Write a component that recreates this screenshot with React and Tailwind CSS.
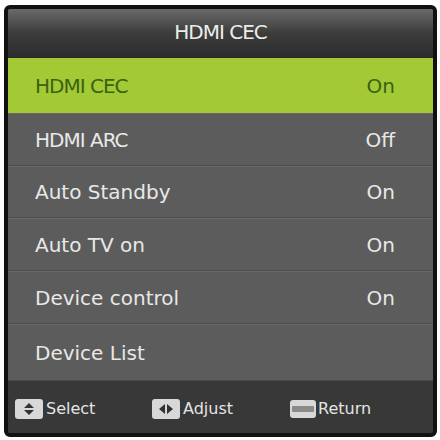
import React from 'react'

// HDMI CEC settings menu as shown on the TV's on-screen display
const rows = [
  { label: 'HDMI ARC', value: 'Off', h: 'h-[53px]' },
  { label: 'Auto Standby', value: 'On', h: 'h-[52px]' },
  { label: 'Auto TV on', value: 'On', h: 'h-[53px]' },
  { label: 'Device control', value: 'On', h: 'h-[53px]' },
  { label: 'Device List', value: '', h: 'h-[57px]' },
]

function KeyIcon({ children, className = '' }) {
  return (
    <span className={`flex items-center justify-center rounded-[3px] bg-[#d8d8d8] ${className}`}>
      {children}
    </span>
  )
}

export default function App() {
  return (
    <div className="w-[440px] h-[440px] bg-white pl-[4px] pt-[5px] font-['DejaVu_Sans',sans-serif]">
      <div className="w-[433px] h-[432px] rounded-[6px] border-[4px] border-[#111] bg-[#3a3a3a] overflow-hidden flex flex-col">
        {/* Title bar */}
        <div className="h-[49px] shrink-0 flex items-center justify-center pb-[4px] bg-gradient-to-b from-[#6a6a6a] via-[#3c3c3c] to-[#2c2c2c] text-[#ececec] text-[20px] tracking-[-1px]">
          HDMI CEC
        </div>

        {/* Selected row */}
        <div className="h-[55px] shrink-0 flex items-center justify-between pl-[27px] pr-[38px] bg-[#a3c935] text-[#3a6212] text-[20px]">
          <span className="tracking-[-1px]">HDMI CEC</span>
          <span>On</span>
        </div>

        {rows.map((r) => (
          <div
            key={r.label}
            className={`${r.h} shrink-0 flex items-center justify-between pl-[27px] pr-[38px] bg-[#5c5c5c] border-t border-t-[#686868] border-b border-b-[#4c4c4c] text-[#e8e8e8] text-[20px]`}
          >
            <span className={r.label.startsWith('HDMI') ? 'tracking-[-1px]' : ''}>{r.label}</span>
            <span>{r.value}</span>
          </div>
        ))}

        {/* Key hints */}
        <div className="flex-1 flex items-center pl-[7px] pt-[4px] bg-[#383838] text-[#e4e4e4] text-[16px]">
          <div className="flex items-center gap-[3px] w-[137px]">
            <KeyIcon className="w-[28px] h-[20px]">
              <svg width="12" height="14" viewBox="0 0 12 14">
                <path d="M6 1 L11 6 H1 Z M6 13 L11 8 H1 Z" fill="#333" />
              </svg>
            </KeyIcon>
            <span>Select</span>
          </div>
          <div className="flex items-center gap-[3px] w-[138px]">
            <KeyIcon className="w-[28px] h-[20px]">
              <svg width="16" height="10" viewBox="0 0 16 10">
                <path d="M1 5 L7 0 V10 Z M15 5 L9 0 V10 Z" fill="#333" />
              </svg>
            </KeyIcon>
            <span>Adjust</span>
          </div>
          <div className="flex items-center gap-[2px]">
            <KeyIcon className="w-[26px] h-[18px]">
              <span className="block w-[22px] h-[6px] bg-[#8a8a8a] rounded-[1px]" />
            </KeyIcon>
            <span>Return</span>
          </div>
        </div>
      </div>
    </div>
  )
}
